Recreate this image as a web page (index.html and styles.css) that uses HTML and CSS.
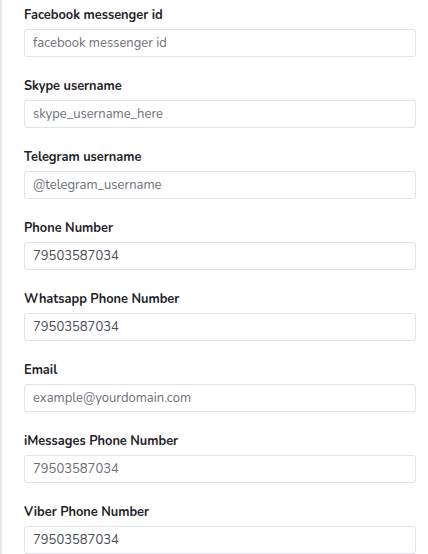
FILE: index.html
```html
<!DOCTYPE html>
<html>
<head>
<meta charset="utf-8">
<link rel="stylesheet" href="styles.css">
</head>
<body>
<div class="panel">
  <div class="field">
    <label class="label">Facebook messenger id</label>
    <input class="input" type="text" placeholder="facebook messenger id">
  </div>
  <div class="field">
    <label class="label">Skype username</label>
    <input class="input" type="text" placeholder="skype_username_here">
  </div>
  <div class="field">
    <label class="label">Telegram username</label>
    <input class="input" type="text" placeholder="@telegram_username">
  </div>
  <div class="field">
    <label class="label">Phone Number</label>
    <input class="input" type="text" value="79503587034">
  </div>
  <div class="field">
    <label class="label">Whatsapp Phone Number</label>
    <input class="input" type="text" value="79503587034">
  </div>
  <div class="field">
    <label class="label">Email</label>
    <input class="input" type="text" placeholder="example@yourdomain.com">
  </div>
  <div class="field">
    <label class="label">iMessages Phone Number</label>
    <input class="input" type="text" placeholder="79503587034">
  </div>
  <div class="field">
    <label class="label">Viber Phone Number</label>
    <input class="input" type="text" value="79503587034">
  </div>
</div>
</body>
</html>
```
FILE: styles.css
```css
html, body {
  margin: 0;
  padding: 0;
  background: #ffffff;
}
.panel {
  border-left: 2px solid #e6e8ec;
  padding: 5px 12px 0 22px;
  min-height: 554px;
  box-sizing: border-box;
  display: flex;
  flex-direction: column;
  gap: 19px;
  font-family: "Nunito", "Lato", "Open Sans", sans-serif;
}
.field {
  display: flex;
  flex-direction: column;
  gap: 4px;
}
.label {
  font-size: 12.8px;
  font-weight: 700;
  line-height: 20px;
  color: #1f2329;
}
.input {
  height: 28px;
  box-sizing: border-box;
  width: 100%;
  border: 1px solid #dfe2e6;
  border-radius: 3px;
  padding: 0 8px;
  font-family: inherit;
  font-size: 13px;
  color: #4a4f57;
  background: #fff;
  outline: none;
}
.input::placeholder {
  color: #6c7079;
  opacity: 1;
}
```
